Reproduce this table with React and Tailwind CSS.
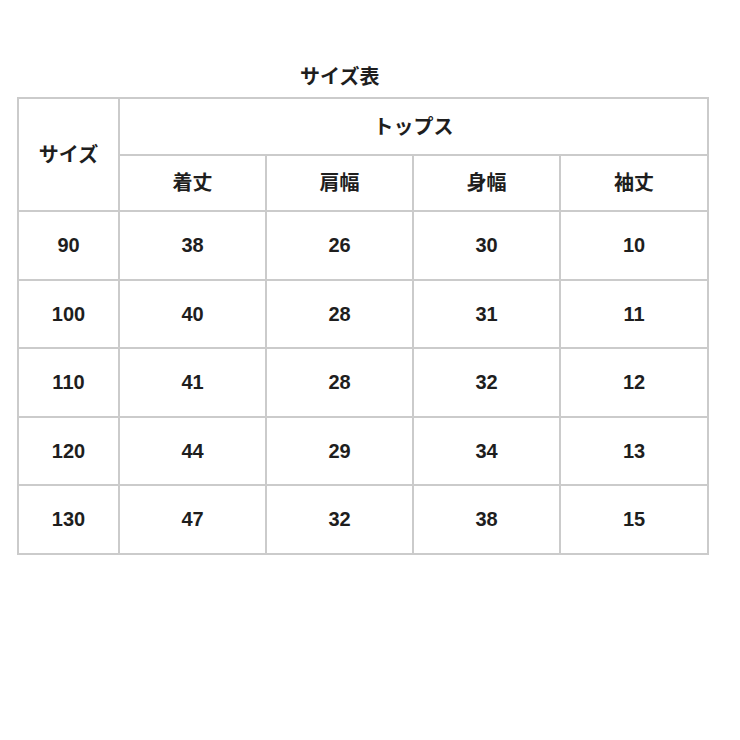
import React from "react";

const rows = [
  ["90", "38", "26", "30", "10"],
  ["100", "40", "28", "31", "11"],
  ["110", "41", "28", "32", "12"],
  ["120", "44", "29", "34", "13"],
  ["130", "47", "32", "38", "15"],
];

const cell = "border-2 border-[#cbcbcb] text-center align-middle p-0";

export default function App() {
  return (
    <div
      className="w-[740px] h-[740px] bg-white text-[#1e1e1e] font-bold"
      style={{ fontFamily: '"Liberation Sans", "Noto Sans CJK JP", sans-serif' }}
    >
      <div className="pt-[64px] pl-[300px] h-[97px] text-[20px] leading-[26px]">サイズ表</div>
      <table className="ml-[17px] border-collapse table-fixed w-[692px] text-[20px]">
        <colgroup>
          <col className="w-[101px]" />
          <col className="w-[147px]" />
          <col className="w-[147px]" />
          <col className="w-[147px]" />
          <col className="w-[148px]" />
        </colgroup>
        <tbody>
          <tr className="h-[57px]">
            <td rowSpan={2} className={cell}>サイズ</td>
            <td colSpan={4} className={cell}>トップス</td>
          </tr>
          <tr className="h-[56px]">
            <td className={cell}>着丈</td>
            <td className={cell}>肩幅</td>
            <td className={cell}>身幅</td>
            <td className={cell}>袖丈</td>
          </tr>
          {rows.map((r, i) => (
            <tr key={i} className="h-[68.5px]">
              {r.map((v, j) => (
                <td key={j} className={cell}>{v}</td>
              ))}
            </tr>
          ))}
        </tbody>
      </table>
    </div>
  );
}
